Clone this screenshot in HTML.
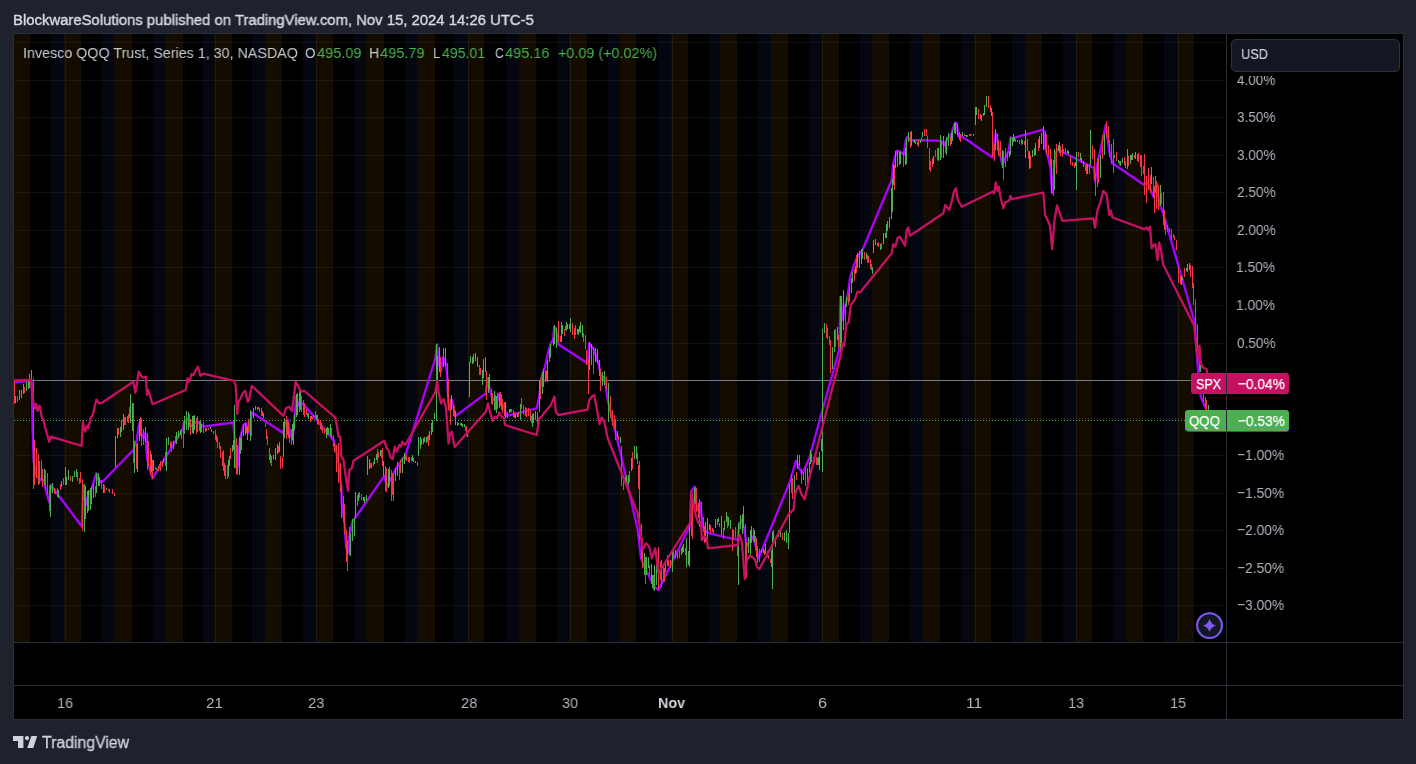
<!DOCTYPE html>
<html><head><meta charset="utf-8"><title>chart</title>
<style>
html,body{margin:0;padding:0;}
body{width:1416px;height:764px;background:#1e222d;overflow:hidden;position:relative;font-family:"Liberation Sans",sans-serif;}
.abs{position:absolute;white-space:nowrap;}
.t{position:absolute;white-space:nowrap;height:20px;line-height:20px;transform-origin:0 50%;will-change:transform;}
#frame{left:13px;top:33px;width:1391px;height:687px;background:#000;box-sizing:border-box;border:1px solid #2a2e39;}
#svg{left:0;top:0;}
#usd{left:1230.5px;top:38.5px;width:169.5px;height:33px;box-sizing:border-box;border:1px solid #2e323e;border-radius:5px;background:#131722;}
#mask4{left:1228px;top:71.5px;width:174px;height:4.5px;background:#000}
.lab{position:absolute;height:21px;box-sizing:border-box}
</style></head><body>
<div class="t" style="left:12.60px;top:9.75px;font-size:14.9px;color:#d9dbe1;transform:scaleX(0.9976);-webkit-text-stroke:0.4px #d9dbe1;">BlockwareSolutions published on TradingView.com, Nov 15, 2024 14:26 UTC-5</div>
<div id="frame" class="abs"></div>
<svg id="svg" class="abs" width="1416" height="764" viewBox="0 0 1416 764">
<defs><clipPath id="cp"><rect x="14" y="34" width="1212" height="608"/></clipPath></defs>
<rect x="14" y="34" width="16" height="608" fill="#140c01" shape-rendering="crispEdges"/>
<rect x="51" y="34" width="13" height="608" fill="#04070f" shape-rendering="crispEdges"/>
<rect x="64" y="34" width="17" height="608" fill="#140c01" shape-rendering="crispEdges"/>
<rect x="102" y="34" width="12" height="608" fill="#04070f" shape-rendering="crispEdges"/>
<rect x="114" y="34" width="18" height="608" fill="#140c01" shape-rendering="crispEdges"/>
<rect x="153" y="34" width="12" height="608" fill="#04070f" shape-rendering="crispEdges"/>
<rect x="165" y="34" width="18" height="608" fill="#140c01" shape-rendering="crispEdges"/>
<rect x="203" y="34" width="11" height="608" fill="#04070f" shape-rendering="crispEdges"/>
<rect x="214" y="34" width="18" height="608" fill="#140c01" shape-rendering="crispEdges"/>
<rect x="252" y="34" width="13" height="608" fill="#04070f" shape-rendering="crispEdges"/>
<rect x="265" y="34" width="17" height="608" fill="#140c01" shape-rendering="crispEdges"/>
<rect x="303" y="34" width="13" height="608" fill="#04070f" shape-rendering="crispEdges"/>
<rect x="316" y="34" width="17" height="608" fill="#140c01" shape-rendering="crispEdges"/>
<rect x="354" y="34" width="12" height="608" fill="#04070f" shape-rendering="crispEdges"/>
<rect x="366" y="34" width="18" height="608" fill="#140c01" shape-rendering="crispEdges"/>
<rect x="405" y="34" width="12" height="608" fill="#04070f" shape-rendering="crispEdges"/>
<rect x="417" y="34" width="18" height="608" fill="#140c01" shape-rendering="crispEdges"/>
<rect x="454" y="34" width="14" height="608" fill="#04070f" shape-rendering="crispEdges"/>
<rect x="468" y="34" width="16" height="608" fill="#140c01" shape-rendering="crispEdges"/>
<rect x="506" y="34" width="13" height="608" fill="#04070f" shape-rendering="crispEdges"/>
<rect x="519" y="34" width="17" height="608" fill="#140c01" shape-rendering="crispEdges"/>
<rect x="557" y="34" width="12" height="608" fill="#04070f" shape-rendering="crispEdges"/>
<rect x="569" y="34" width="18" height="608" fill="#140c01" shape-rendering="crispEdges"/>
<rect x="608" y="34" width="12" height="608" fill="#04070f" shape-rendering="crispEdges"/>
<rect x="620" y="34" width="16" height="608" fill="#140c01" shape-rendering="crispEdges"/>
<rect x="658" y="34" width="13" height="608" fill="#04070f" shape-rendering="crispEdges"/>
<rect x="671" y="34" width="17" height="608" fill="#140c01" shape-rendering="crispEdges"/>
<rect x="709" y="34" width="11" height="608" fill="#04070f" shape-rendering="crispEdges"/>
<rect x="720" y="34" width="17" height="608" fill="#140c01" shape-rendering="crispEdges"/>
<rect x="758" y="34" width="13" height="608" fill="#04070f" shape-rendering="crispEdges"/>
<rect x="771" y="34" width="17" height="608" fill="#140c01" shape-rendering="crispEdges"/>
<rect x="809" y="34" width="13" height="608" fill="#04070f" shape-rendering="crispEdges"/>
<rect x="822" y="34" width="17" height="608" fill="#140c01" shape-rendering="crispEdges"/>
<rect x="860" y="34" width="12" height="608" fill="#04070f" shape-rendering="crispEdges"/>
<rect x="872" y="34" width="17" height="608" fill="#140c01" shape-rendering="crispEdges"/>
<rect x="910" y="34" width="13" height="608" fill="#04070f" shape-rendering="crispEdges"/>
<rect x="923" y="34" width="17" height="608" fill="#140c01" shape-rendering="crispEdges"/>
<rect x="961" y="34" width="13" height="608" fill="#04070f" shape-rendering="crispEdges"/>
<rect x="974" y="34" width="17" height="608" fill="#140c01" shape-rendering="crispEdges"/>
<rect x="1012" y="34" width="13" height="608" fill="#04070f" shape-rendering="crispEdges"/>
<rect x="1025" y="34" width="17" height="608" fill="#140c01" shape-rendering="crispEdges"/>
<rect x="1063" y="34" width="13" height="608" fill="#04070f" shape-rendering="crispEdges"/>
<rect x="1076" y="34" width="16" height="608" fill="#140c01" shape-rendering="crispEdges"/>
<rect x="1113" y="34" width="13" height="608" fill="#04070f" shape-rendering="crispEdges"/>
<rect x="1126" y="34" width="17" height="608" fill="#140c01" shape-rendering="crispEdges"/>
<rect x="1164" y="34" width="13" height="608" fill="#04070f" shape-rendering="crispEdges"/>
<rect x="1177" y="34" width="17" height="608" fill="#140c01" shape-rendering="crispEdges"/>
<line x1="14" x2="1226" y1="605.5" y2="605.5" stroke="rgba(240,243,250,0.058)" stroke-width="1"/>
<line x1="14" x2="1226" y1="568.5" y2="568.5" stroke="rgba(240,243,250,0.058)" stroke-width="1"/>
<line x1="14" x2="1226" y1="530.5" y2="530.5" stroke="rgba(240,243,250,0.058)" stroke-width="1"/>
<line x1="14" x2="1226" y1="493.5" y2="493.5" stroke="rgba(240,243,250,0.058)" stroke-width="1"/>
<line x1="14" x2="1226" y1="455.5" y2="455.5" stroke="rgba(240,243,250,0.058)" stroke-width="1"/>
<line x1="14" x2="1226" y1="418.5" y2="418.5" stroke="rgba(240,243,250,0.058)" stroke-width="1"/>
<line x1="14" x2="1226" y1="380.5" y2="380.5" stroke="rgba(240,243,250,0.058)" stroke-width="1"/>
<line x1="14" x2="1226" y1="343.5" y2="343.5" stroke="rgba(240,243,250,0.058)" stroke-width="1"/>
<line x1="14" x2="1226" y1="305.5" y2="305.5" stroke="rgba(240,243,250,0.058)" stroke-width="1"/>
<line x1="14" x2="1226" y1="267.5" y2="267.5" stroke="rgba(240,243,250,0.058)" stroke-width="1"/>
<line x1="14" x2="1226" y1="230.5" y2="230.5" stroke="rgba(240,243,250,0.058)" stroke-width="1"/>
<line x1="14" x2="1226" y1="192.5" y2="192.5" stroke="rgba(240,243,250,0.058)" stroke-width="1"/>
<line x1="14" x2="1226" y1="155.5" y2="155.5" stroke="rgba(240,243,250,0.058)" stroke-width="1"/>
<line x1="14" x2="1226" y1="117.5" y2="117.5" stroke="rgba(240,243,250,0.058)" stroke-width="1"/>
<line x1="14" x2="1226" y1="80.5" y2="80.5" stroke="rgba(240,243,250,0.058)" stroke-width="1"/>
<line x1="14" x2="1226" y1="42.5" y2="42.5" stroke="rgba(240,243,250,0.058)" stroke-width="1"/>
<line x1="65.5" x2="65.5" y1="34" y2="642" stroke="rgba(245,225,195,0.065)" stroke-width="1"/>
<line x1="215.5" x2="215.5" y1="34" y2="642" stroke="rgba(245,225,195,0.065)" stroke-width="1"/>
<line x1="316.5" x2="316.5" y1="34" y2="642" stroke="rgba(245,225,195,0.065)" stroke-width="1"/>
<line x1="468.5" x2="468.5" y1="34" y2="642" stroke="rgba(245,225,195,0.065)" stroke-width="1"/>
<line x1="570.5" x2="570.5" y1="34" y2="642" stroke="rgba(245,225,195,0.065)" stroke-width="1"/>
<line x1="672.5" x2="672.5" y1="34" y2="642" stroke="rgba(245,225,195,0.065)" stroke-width="1"/>
<line x1="822.5" x2="822.5" y1="34" y2="642" stroke="rgba(245,225,195,0.065)" stroke-width="1"/>
<line x1="975.5" x2="975.5" y1="34" y2="642" stroke="rgba(245,225,195,0.065)" stroke-width="1"/>
<line x1="1076.5" x2="1076.5" y1="34" y2="642" stroke="rgba(245,225,195,0.065)" stroke-width="1"/>
<line x1="1178.5" x2="1178.5" y1="34" y2="642" stroke="rgba(245,225,195,0.065)" stroke-width="1"/>
<g clip-path="url(#cp)">
<line x1="14" x2="1192" y1="380.5" y2="380.5" stroke="#787b86" stroke-width="1"/>
<line x1="14" x2="1186" y1="420.5" y2="420.5" stroke="#4caf50" stroke-width="1" stroke-dasharray="1,2"/>
<path d="M13.7,382.5 L30.0,380.8 L31.7,381.7 L32.5,426.7 L33.7,461.7 L36.7,476.7 L40.8,480.0 L44.2,480.0 L45.8,490.0 L49.2,502.5 L50.8,485.0 L82.0,526.7 L83.0,485.0 L85.8,505.0 L88.3,495.0 L91.7,488.3 L96.3,473.3 L98.3,480.0 L101.7,482.5 L133.3,450.0 L136.7,440.0 L139.2,423.3 L141.7,435.0 L143.3,438.3 L145.3,433.3 L147.0,458.3 L150.0,470.0 L152.5,478.3 L182.5,430.0 L184.2,423.3 L188.3,418.3 L190.8,426.7 L193.3,423.3 L197.5,421.7 L203.3,426.7 L233.3,422.5 L235.0,443.3 L236.3,468.3 L237.7,466.7 L240.2,438.0 L243.5,425.0 L246.0,423.3 L248.5,433.3 L251.8,412.5 L283.2,433.0 L285.2,421.7 L287.7,420.0 L290.2,433.3 L292.7,440.0 L294.3,420.0 L296.3,396.7 L298.5,405.8 L301.8,403.3 L304.3,405.0 L333.5,440.0 L336.0,450.0 L338.5,463.3 L341.3,486.7 L341.8,505.0 L344.3,520.0 L346.0,546.7 L347.7,553.3 L349.3,536.7 L352.7,520.8 L354.3,519.2 L384.3,475.8 L386.8,486.7 L391.0,478.3 L396.0,468.3 L402.7,458.3 L405.2,455.8 L435.5,358.0 L437.0,344.5 L439.2,365.0 L440.8,371.7 L443.0,357.5 L445.0,360.0 L447.0,373.3 L448.3,403.3 L449.7,410.0 L451.7,399.2 L454.2,410.0 L455.8,415.8 L485.8,393.3 L487.5,378.3 L489.2,386.7 L491.7,396.7 L494.2,400.0 L496.7,403.3 L499.5,393.3 L501.7,401.7 L504.2,408.3 L506.7,415.8 L536.7,408.3 L539.2,396.7 L541.7,376.7 L545.0,366.7 L548.3,351.7 L550.8,343.3 L553.0,340.0 L554.2,326.7 L555.8,328.3 L558.3,344.2 L587.5,363.3 L589.2,343.3 L591.7,346.7 L594.2,350.0 L596.7,358.3 L599.2,366.7 L601.7,380.0 L604.2,376.7 L606.7,393.3 L607.7,400.0 L621.0,455.0 L637.7,530.0 L641.0,558.3 L644.3,566.7 L649.3,576.7 L651.8,581.7 L654.3,586.7 L658.5,590.0 L690.2,525.0 L691.0,491.7 L694.7,486.7 L696.8,510.0 L700.2,501.7 L702.7,526.7 L706.0,531.7 L709.3,533.3 L737.7,540.0 L739.3,523.3 L741.8,520.0 L744.3,530.0 L746.8,546.7 L749.3,541.7 L752.7,536.7 L756.0,546.7 L758.5,558.3 L789.3,483.3 L796.0,460.8 L798.5,466.7 L801.8,473.3 L804.2,470.0 L807.7,461.7 L809.3,458.3 L823.3,407.0 L839.2,350.0 L840.5,296.7 L842.5,320.0 L845.0,306.7 L847.5,296.7 L850.0,278.0 L853.3,266.7 L856.7,258.3 L860.0,253.3 L862.5,250.0 L891.7,180.0 L893.3,163.3 L896.7,150.8 L900.8,151.7 L903.7,155.0 L905.8,140.0 L907.5,136.7 L910.0,140.0 L940.8,140.8 L944.2,145.0 L947.5,138.3 L950.8,135.0 L955.0,122.5 L956.7,123.3 L958.3,136.7 L960.8,135.8 L992.5,157.5 L994.2,143.3 L995.8,133.3 L998.0,143.3 L1000.0,155.0 L1002.5,165.0 L1005.0,158.3 L1008.3,151.7 L1010.8,137.5 L1012.5,138.3 L1043.3,129.5 L1045.5,149.0 L1048.3,158.3 L1050.5,169.0 L1052.2,193.3 L1054.2,167.0 L1055.8,153.3 L1057.5,149.2 L1062.5,151.7 L1094.2,168.3 L1095.0,181.7 L1097.5,163.3 L1100.8,148.3 L1104.2,132.5 L1105.8,125.0 L1107.5,138.3 L1110.0,154.2 L1112.5,163.3 L1144.2,185.0 L1147.5,181.7 L1150.8,190.0 L1153.3,196.7 L1156.7,183.3 L1159.2,203.3 L1162.5,211.7 L1164.2,216.7 L1195.0,323.3 L1196.5,351.5 L1198.2,371.5 L1200.7,396.4 L1204.0,404.7 L1206.5,409.7 L1209.0,418.0" fill="none" stroke="#aa00ff" stroke-width="2.3" stroke-linejoin="round" stroke-linecap="round"/>
<path d="M15.5,396.3V403.2M19.5,390.0V400.0M21.5,389.9V397.7M23.5,384.4V393.6M26.5,381.6V391.1M28.5,381.1V389.4M29.5,374.2V387.7M31.5,370.4V382.0M44.5,468.8V485.3M50.5,484.8V517.3M52.5,482.5V492.7M58.5,489.8V497.8M61.5,480.8V487.2M65.5,466.6V484.5M66.5,477.4V484.5M68.5,470.1V479.7M72.5,476.0V481.7M74.5,470.5V477.4M76.5,469.0V476.5M84.5,483.5V532.4M85.5,486.3V519.4M87.5,491.4V512.9M88.5,490.2V510.8M90.5,487.8V509.8M91.5,487.4V503.8M93.5,483.7V497.7M96.5,472.9V492.5M98.5,472.8V485.5M99.5,476.7V486.1M103.5,484.0V492.5M106.5,488.0V490.0M115.5,436.4V467.2M117.5,428.3V437.8M120.5,426.9V436.6M121.5,420.4V431.7M123.5,413.9V429.7M130.5,394.4V422.5M132.5,402.7V430.8M134.5,441.3V472.6M137.5,443.1V471.7M139.5,418.8V441.1M145.5,427.3V441.5M151.5,454.1V471.5M153.5,460.0V471.4M156.5,468.0V470.0M163.5,458.8V463.2M166.5,438.3V470.7M168.5,437.0V444.7M173.5,440.8V448.5M176.5,431.6V443.7M178.5,430.6V437.6M180.5,430.1V434.8M184.5,415.9V434.1M186.5,410.9V430.3M188.5,412.0V430.0M192.5,416.4V432.8M193.5,415.6V433.8M194.5,414.7V429.5M200.5,419.7V432.5M201.5,423.9V432.4M210.5,427.0V429.2M228.5,460.2V476.7M229.5,456.0V465.6M232.5,444.5V452.0M233.5,440.1V449.7M234.5,405.1V467.8M239.5,436.5V475.1M240.5,438.2V454.4M241.5,432.3V449.7M243.5,425.0V436.3M245.5,422.7V435.2M247.5,425.5V439.8M250.5,410.2V441.4M253.5,408.4V418.0M255.5,406.3V409.7M257.5,406.8V409.9M263.5,412.8V417.6M270.5,453.8V462.8M273.5,455.3V459.0M275.5,447.8V460.2M277.5,444.3V454.1M279.5,441.9V451.5M283.5,421.8V457.2M284.5,418.3V438.3M292.5,424.3V440.2M293.5,422.5V445.0M294.5,414.5V430.2M296.5,393.5V417.0M297.5,393.1V415.3M299.5,388.6V411.5M300.5,391.1V409.5M308.5,412.8V418.5M311.5,415.9V419.0M313.5,414.6V416.9M316.5,415.4V420.0M326.5,428.3V437.5M327.5,426.7V435.0M328.5,427.7V434.3M330.5,423.7V435.9M350.5,532.8V555.7M352.5,518.5V540.6M354.5,517.9V536.1M355.5,492.2V518.2M358.5,493.3V500.8M363.5,497.1V500.9M364.5,496.9V503.0M366.5,495.1V500.7M367.5,456.4V475.1M369.5,459.4V468.9M374.5,458.4V463.6M376.5,453.9V460.2M380.5,449.7V456.0M383.5,461.2V476.0M388.5,468.6V488.1M389.5,467.4V485.7M395.5,468.3V481.1M397.5,461.7V475.7M402.5,457.8V472.7M404.5,452.5V464.2M412.5,455.3V461.1M413.5,458.1V461.7M415.5,460.6V463.3M418.5,437.2V456.1M420.5,437.0V448.6M421.5,439.0V444.8M423.5,438.2V443.6M424.5,437.4V441.8M426.5,437.3V442.9M429.5,430.9V440.4M431.5,423.1V435.0M432.5,420.3V432.3M434.5,412.9V418.8M436.5,344.4V421.2M437.5,355.5V388.2M439.5,347.2V372.1M443.5,348.0V367.1M445.5,348.4V365.7M451.5,395.1V410.3M455.5,411.3V425.2M458.5,422.9V425.1M460.5,423.1V424.9M461.5,423.1V425.5M462.5,423.6V426.5M464.5,424.2V427.0M467.5,430.9V437.1M469.5,361.7V396.6M470.5,355.5V363.1M472.5,357.0V363.6M473.5,353.9V363.3M475.5,352.5V361.1M477.5,356.9V367.0M482.5,370.1V385.1M483.5,359.0V377.8M485.5,356.6V371.9M488.5,376.7V392.9M489.5,374.2V388.9M494.5,391.0V410.1M496.5,395.8V412.6M499.5,394.4V408.0M505.5,402.4V418.3M509.5,408.8V413.3M510.5,408.7V412.3M515.5,413.8V418.2M517.5,412.8V416.8M520.5,403.7V419.7M532.5,413.7V427.3M533.5,412.9V422.9M535.5,410.6V419.7M537.5,411.8V434.7M539.5,381.1V411.8M542.5,371.9V394.4M543.5,369.0V387.0M545.5,370.6V381.7M547.5,360.3V382.3M549.5,349.1V362.0M550.5,344.1V358.2M553.5,337.9V345.8M554.5,324.8V344.3M556.5,328.2V348.1M561.5,321.6V341.5M562.5,325.1V333.8M566.5,321.5V330.6M567.5,323.8V328.9M569.5,323.8V328.6M570.5,318.0V332.0M577.5,328.8V334.3M578.5,328.9V335.4M579.5,326.2V332.3M580.5,322.2V333.4M582.5,325.0V336.9M589.5,342.3V369.5M591.5,343.5V365.0M595.5,348.1V362.3M597.5,349.3V363.3M599.5,359.6V376.4M602.5,371.8V386.1M604.5,370.9V384.6M608.5,383.4V421.5M617.5,431.1V436.9M620.5,437.3V443.0M625.5,476.5V483.4M626.5,475.3V484.7M628.5,474.5V485.3M631.5,458.3V471.4M634.5,445.7V458.9M636.5,446.0V458.7M644.5,552.5V575.2M646.5,556.8V575.1M648.5,557.3V568.4M651.5,564.4V583.5M652.5,575.1V588.4M654.5,564.6V591.3M656.5,560.0V584.6M665.5,562.9V572.4M672.5,550.7V571.7M675.5,550.0V557.5M681.5,548.1V554.8M682.5,546.3V552.6M683.5,544.4V551.7M686.5,538.2V567.4M688.5,551.0V565.1M689.5,526.2V566.9M694.5,488.1V509.7M705.5,521.9V542.0M707.5,518.1V537.7M709.5,523.8V530.4M715.5,519.2V528.3M717.5,519.1V524.6M718.5,518.0V522.0M721.5,515.7V534.9M724.5,520.5V529.6M726.5,512.1V522.1M728.5,517.1V525.9M730.5,519.9V528.5M738.5,523.3V585.3M740.5,514.8V529.4M742.5,514.3V533.5M743.5,506.0V528.3M748.5,536.5V552.8M750.5,529.7V555.7M751.5,525.7V542.5M754.5,530.3V541.8M761.5,548.7V553.4M763.5,548.3V552.6M765.5,543.5V553.7M771.5,550.4V567.1M772.5,532.1V588.7M773.5,529.5V540.1M775.5,536.7V546.6M778.5,530.1V537.0M780.5,528.0V536.5M784.5,531.5V540.9M786.5,530.0V542.9M788.5,532.8V549.1M789.5,484.1V533.0M794.5,475.1V503.4M797.5,454.7V469.3M799.5,454.6V465.8M803.5,472.2V479.5M807.5,468.0V485.4M809.5,461.5V473.0M810.5,449.5V464.0M811.5,453.8V461.6M818.5,456.7V464.6M819.5,452.0V469.7M821.5,439.4V451.1M822.5,328.5V472.0M824.5,322.6V333.4M832.5,346.7V369.0M834.5,330.1V351.8M837.5,327.2V339.6M840.5,295.8V352.2M841.5,295.8V343.3M843.5,290.4V329.8M846.5,296.6V306.9M851.5,277.5V293.3M852.5,272.4V283.3M855.5,265.5V274.4M857.5,253.3V267.5M859.5,251.1V268.1M861.5,248.9V263.5M862.5,248.7V259.2M866.5,253.3V258.5M872.5,266.9V273.8M873.5,239.8V253.1M875.5,239.0V244.6M880.5,243.5V249.8M883.5,233.0V244.2M885.5,233.4V237.6M886.5,223.8V237.7M887.5,220.9V231.4M889.5,217.0V228.1M891.5,187.8V219.4M892.5,178.5V212.3M893.5,163.5V184.6M895.5,150.8V167.5M897.5,150.5V167.1M899.5,152.4V165.3M900.5,151.7V163.8M905.5,148.2V164.7M906.5,139.2V163.9M908.5,131.8V142.2M911.5,131.3V146.0M914.5,139.8V142.5M917.5,141.8V144.8M920.5,140.0V142.8M922.5,132.4V137.3M933.5,155.6V163.6M938.5,147.9V161.2M940.5,135.0V160.1M943.5,136.1V158.2M946.5,136.8V154.5M948.5,133.3V145.9M951.5,133.4V144.1M952.5,130.3V141.0M954.5,122.6V132.9M955.5,122.5V134.3M957.5,123.8V135.1M962.5,131.6V136.4M966.5,135.0V137.0M975.5,106.6V124.8M976.5,107.0V114.6M981.5,115.3V120.7M983.5,112.6V116.3M984.5,104.5V114.7M986.5,95.7V107.1M991.5,107.5V116.1M995.5,129.0V150.4M1002.5,150.2V167.6M1009.5,150.5V156.6M1010.5,137.0V155.2M1012.5,137.7V145.7M1013.5,134.2V141.6M1014.5,136.6V140.6M1017.5,139.6V142.3M1022.5,139.5V144.3M1025.5,130.4V157.6M1029.5,150.6V168.6M1032.5,149.6V156.5M1034.5,148.2V155.9M1035.5,142.7V155.1M1039.5,136.0V148.4M1041.5,132.8V144.0M1043.5,126.3V150.2M1051.5,159.1V193.0M1054.5,148.8V190.1M1058.5,145.2V151.1M1059.5,141.9V152.7M1067.5,150.2V152.9M1068.5,151.2V154.0M1075.5,161.8V166.2M1076.5,151.5V189.9M1080.5,152.8V159.6M1081.5,157.8V163.3M1083.5,160.8V167.1M1087.5,163.8V174.4M1090.5,129.9V164.8M1100.5,154.6V178.4M1104.5,133.9V154.5M1114.5,154.6V158.4M1118.5,159.5V162.5M1120.5,161.3V166.0M1122.5,157.6V163.1M1127.5,148.7V168.5M1130.5,155.2V163.9M1131.5,154.8V160.0M1132.5,153.1V160.2M1135.5,151.9V158.6M1151.5,167.2V184.2M1160.5,185.0V206.2M1181.5,276.2V284.8M1182.5,277.0V279.9M1186.5,267.6V271.3M1187.5,264.1V271.9M1189.5,263.2V270.1M1200.5,365.0V372.4M1208.5,404.9V411.1" stroke="#4caf50" stroke-width="1" fill="none" shape-rendering="crispEdges"/><path d="M14.5,380.6V404.0M17.5,396.1V402.0M24.5,386.5V392.6M33.5,377.5V489.0M34.5,440.0V484.5M36.5,447.9V478.3M38.5,453.8V484.6M39.5,461.3V484.1M41.5,459.7V480.3M42.5,469.2V487.3M45.5,470.2V489.3M47.5,472.6V495.3M49.5,485.5V510.8M54.5,488.3V493.8M55.5,489.5V494.2M57.5,488.2V496.6M60.5,483.5V490.1M63.5,478.0V484.5M70.5,476.0V481.0M77.5,471.9V480.5M79.5,477.6V483.5M80.5,471.5V482.7M82.5,479.1V530.9M95.5,485.5V497.2M101.5,480.0V488.5M104.5,485.2V493.0M108.5,488.8V491.1M109.5,488.6V493.3M112.5,489.1V493.9M114.5,492.6V496.3M118.5,428.2V435.2M124.5,417.0V424.5M125.5,417.3V425.2M127.5,416.0V422.3M128.5,413.6V423.4M129.5,407.3V418.3M133.5,403.3V463.0M136.5,444.1V469.2M140.5,417.2V435.6M141.5,417.7V446.3M143.5,428.8V444.8M147.5,432.9V469.9M148.5,441.0V465.6M150.5,451.2V475.0M152.5,459.8V479.3M155.5,466.5V469.1M158.5,466.4V470.5M159.5,464.3V467.8M160.5,460.8V471.1M162.5,461.7V467.4M165.5,451.7V465.5M170.5,440.7V447.6M171.5,442.4V451.7M175.5,435.6V443.2M181.5,428.8V439.2M183.5,421.3V447.8M189.5,413.6V427.2M190.5,418.5V434.7M196.5,417.9V433.6M197.5,416.1V432.0M199.5,421.0V431.3M203.5,421.6V433.2M205.5,428.4V431.8M206.5,427.8V430.6M208.5,428.1V430.0M211.5,428.6V431.6M213.5,430.9V434.0M215.5,430.3V439.8M216.5,434.8V442.2M217.5,436.9V447.8M219.5,442.1V449.4M220.5,445.9V457.6M222.5,451.8V466.1M223.5,449.5V470.5M224.5,463.4V476.1M225.5,465.4V478.7M227.5,465.3V479.2M230.5,448.4V459.3M236.5,437.8V473.9M237.5,445.1V475.4M246.5,426.6V433.4M248.5,418.6V432.0M251.5,412.4V435.8M258.5,406.6V409.4M259.5,408.3V411.8M261.5,408.3V415.8M262.5,410.9V416.3M265.5,422.6V427.0M266.5,429.1V438.5M267.5,435.7V444.5M269.5,447.9V460.4M271.5,456.4V466.0M278.5,445.5V452.8M280.5,455.5V468.5M282.5,457.4V468.3M286.5,415.7V438.9M287.5,419.9V435.1M288.5,421.7V437.8M289.5,431.1V442.6M291.5,429.2V444.8M301.5,395.9V411.9M303.5,400.1V415.1M304.5,402.7V416.8M306.5,409.0V415.0M307.5,412.5V416.6M310.5,416.3V421.8M312.5,416.7V419.5M315.5,410.6V417.6M317.5,414.5V424.0M318.5,419.0V425.4M320.5,419.6V429.0M321.5,423.2V429.8M322.5,427.3V433.1M324.5,428.4V434.0M331.5,427.9V438.7M333.5,434.9V447.0M334.5,442.6V452.2M336.5,445.4V472.3M338.5,442.5V483.0M340.5,462.7V492.1M341.5,484.7V518.3M343.5,495.9V522.1M344.5,504.1V533.9M346.5,529.9V561.7M347.5,539.7V570.6M349.5,526.9V554.5M357.5,495.0V505.9M359.5,492.0V497.9M361.5,494.2V500.0M370.5,463.1V468.2M371.5,463.4V468.4M373.5,461.5V466.1M377.5,448.9V462.8M378.5,452.3V457.7M381.5,450.1V458.0M382.5,448.0V466.1M385.5,465.9V490.9M386.5,467.9V491.8M391.5,469.8V501.1M392.5,472.8V494.6M393.5,473.6V501.4M399.5,464.9V480.1M400.5,460.4V472.7M405.5,454.5V459.7M406.5,455.4V461.1M408.5,457.3V462.4M409.5,456.9V463.1M411.5,456.9V461.3M417.5,462.2V466.1M427.5,436.3V441.7M428.5,434.7V446.3M440.5,356.7V377.0M447.5,362.9V396.7M448.5,379.2V410.3M450.5,399.2V425.0M453.5,404.1V416.1M454.5,406.1V416.5M457.5,421.5V426.2M465.5,425.9V430.5M466.5,426.3V435.5M479.5,365.1V375.2M480.5,367.5V374.6M486.5,370.5V400.3M491.5,388.5V403.6M492.5,392.6V404.7M495.5,394.5V410.0M497.5,392.5V409.1M500.5,391.7V405.7M501.5,394.3V409.8M502.5,399.1V413.2M504.5,402.3V416.1M507.5,412.0V417.6M511.5,409.1V411.8M513.5,410.2V417.4M514.5,412.4V417.7M518.5,411.7V416.5M521.5,398.0V409.4M523.5,404.5V415.2M525.5,406.6V415.8M526.5,408.2V417.3M528.5,408.0V416.1M530.5,410.1V420.1M531.5,416.0V423.2M540.5,377.8V399.4M546.5,370.1V381.0M558.5,321.4V341.7M560.5,335.9V342.3M564.5,329.0V335.5M565.5,325.6V330.2M572.5,323.4V334.9M574.5,327.8V339.2M575.5,325.0V334.8M583.5,332.5V341.5M585.5,334.6V349.4M586.5,350.3V365.0M588.5,359.1V394.2M593.5,346.5V373.5M600.5,368.9V391.0M606.5,376.7V389.1M610.5,396.1V417.6M612.5,409.8V425.9M614.5,415.1V429.4M615.5,418.6V439.6M618.5,436.2V440.1M621.5,446.2V486.4M623.5,474.6V489.7M629.5,471.3V481.7M632.5,451.6V468.9M637.5,452.6V463.7M638.5,464.5V489.1M639.5,461.4V539.7M641.5,523.5V558.5M642.5,538.1V567.8M645.5,557.4V584.3M649.5,565.3V574.9M653.5,574.5V590.0M658.5,546.8V589.4M660.5,561.0V579.9M661.5,560.2V587.0M663.5,565.5V582.1M664.5,568.1V581.8M667.5,555.1V566.4M668.5,560.0V566.3M670.5,559.8V567.5M673.5,550.4V558.7M677.5,551.8V558.5M679.5,549.6V557.6M685.5,547.5V554.7M691.5,494.9V536.0M692.5,494.9V539.1M695.5,486.6V503.8M696.5,487.8V512.4M698.5,502.9V518.4M699.5,499.3V526.5M701.5,502.1V539.7M703.5,517.0V532.2M704.5,525.7V543.3M710.5,525.1V532.9M712.5,527.9V532.4M713.5,529.3V532.8M719.5,522.9V526.7M723.5,527.8V539.1M727.5,516.1V527.5M732.5,528.5V551.0M733.5,530.0V538.8M735.5,526.5V537.6M737.5,538.0V555.8M745.5,524.2V574.9M746.5,541.8V578.2M753.5,528.3V541.6M755.5,535.6V549.6M756.5,538.2V557.3M757.5,545.9V562.7M759.5,548.8V561.5M764.5,549.9V555.0M767.5,551.4V557.1M768.5,555.3V558.6M770.5,558.5V562.6M776.5,534.7V538.5M782.5,533.0V539.9M791.5,474.3V493.3M792.5,478.0V499.3M796.5,472.1V479.7M801.5,469.0V483.9M805.5,467.1V486.2M813.5,457.1V460.9M814.5,458.7V462.9M816.5,457.1V464.6M817.5,458.3V465.2M826.5,324.0V337.6M827.5,327.6V338.6M829.5,336.4V344.6M830.5,339.7V372.7M835.5,328.7V347.4M838.5,335.4V347.4M845.5,304.3V335.0M848.5,294.1V305.0M849.5,286.1V301.5M854.5,268.5V280.5M856.5,254.6V273.3M864.5,252.4V260.0M867.5,255.2V262.8M868.5,256.2V263.1M870.5,259.1V268.7M871.5,263.9V270.4M877.5,242.8V246.2M878.5,242.2V247.1M881.5,243.3V248.6M894.5,165.0V189.7M903.5,151.7V166.9M910.5,132.3V147.6M913.5,139.5V142.3M915.5,140.5V143.5M918.5,140.1V146.9M921.5,136.5V141.4M924.5,128.8V136.1M926.5,129.0V135.8M927.5,136.4V147.6M929.5,148.1V170.4M930.5,161.3V171.7M932.5,158.0V166.8M935.5,150.1V157.1M937.5,148.4V159.7M941.5,140.1V158.3M945.5,140.8V153.0M950.5,137.2V145.7M959.5,131.5V140.2M960.5,133.7V141.7M964.5,133.5V136.3M965.5,134.6V136.4M967.5,135.0V136.7M969.5,134.0V135.9M970.5,134.3V135.5M971.5,133.8V135.1M973.5,134.0V136.0M978.5,109.0V118.5M980.5,114.4V119.1M988.5,96.2V107.8M990.5,104.7V112.4M992.5,112.1V157.2M994.5,143.5V160.9M997.5,134.3V151.3M998.5,139.7V155.9M1000.5,140.7V157.3M1003.5,150.8V180.2M1005.5,147.9V167.3M1007.5,152.2V161.3M1015.5,138.6V142.4M1019.5,140.2V144.0M1021.5,138.9V145.1M1024.5,141.1V144.9M1027.5,139.4V151.2M1028.5,150.8V158.7M1030.5,154.9V167.9M1038.5,139.0V151.0M1045.5,131.1V148.8M1046.5,133.6V154.1M1048.5,145.1V156.4M1050.5,148.9V165.6M1053.5,159.6V195.9M1056.5,144.0V174.4M1060.5,145.9V155.8M1062.5,144.0V157.4M1063.5,148.5V154.2M1065.5,148.0V153.8M1070.5,155.5V165.1M1072.5,161.9V165.8M1074.5,162.8V167.5M1078.5,151.7V157.3M1085.5,165.1V170.9M1086.5,163.5V174.3M1089.5,163.9V173.5M1092.5,145.3V159.3M1094.5,149.3V180.1M1095.5,173.3V195.8M1097.5,157.5V186.6M1098.5,158.5V182.6M1102.5,134.5V159.0M1106.5,121.0V136.5M1108.5,125.8V141.7M1109.5,140.2V157.3M1111.5,144.3V164.1M1113.5,138.5V173.4M1116.5,151.9V160.5M1119.5,161.3V164.7M1124.5,157.4V165.4M1125.5,161.3V167.9M1128.5,156.3V166.2M1134.5,154.6V158.2M1137.5,154.0V160.8M1138.5,152.8V162.3M1140.5,154.8V167.2M1141.5,154.8V175.5M1143.5,166.4V173.6M1144.5,153.8V194.9M1146.5,175.7V202.6M1148.5,168.4V189.6M1150.5,175.4V192.7M1153.5,177.4V197.6M1154.5,185.6V212.5M1155.5,175.8V193.3M1156.5,180.9V208.8M1158.5,184.5V209.8M1161.5,193.0V204.2M1163.5,192.4V224.6M1164.5,210.4V230.4M1165.5,220.4V235.4M1167.5,224.6V231.5M1169.5,228.2V232.0M1171.5,228.6V240.2M1173.5,234.2V237.8M1174.5,236.0V240.1M1176.5,239.8V250.2M1178.5,267.2V283.3M1180.5,275.0V283.6M1184.5,267.5V277.0M1190.5,265.4V276.6M1192.5,265.6V287.5M1193.5,282.7V304.9M1195.5,298.6V329.7M1197.5,324.4V363.0M1199.5,349.5V371.5M1202.5,377.3V392.2M1203.5,390.0V401.5M1205.5,397.1V407.0M1206.5,400.4V411.2" stroke="#f23645" stroke-width="1" fill="none" shape-rendering="crispEdges"/>
<path d="M13.7,380.3 L30.8,380.0 L32.0,390.0 L33.3,401.7 L35.0,408.3 L36.3,404.2 L37.5,410.8 L39.7,405.8 L41.7,416.7 L43.3,420.0 L45.8,430.0 L49.2,441.7 L50.8,436.7 L81.7,445.8 L82.8,421.7 L85.0,431.7 L87.0,425.8 L88.3,428.3 L90.8,417.5 L92.8,415.0 L96.3,399.7 L99.2,403.3 L102.5,402.5 L133.3,381.7 L135.3,392.5 L136.7,385.0 L138.7,371.7 L141.7,376.7 L143.3,377.5 L145.8,376.7 L147.0,395.0 L148.3,390.0 L152.5,404.2 L185.8,390.0 L187.5,378.3 L189.2,381.7 L191.7,374.2 L193.3,375.0 L195.0,371.7 L198.0,366.7 L200.3,375.8 L203.3,373.7 L234.2,380.8 L235.8,386.7 L237.2,414.0 L238.5,402.0 L241.0,397.5 L242.7,393.3 L245.2,390.8 L247.7,401.7 L249.0,400.0 L251.8,385.8 L283.5,415.8 L286.0,408.3 L289.0,406.7 L291.8,410.8 L293.5,400.0 L295.7,381.7 L298.5,386.7 L301.0,391.7 L304.3,390.8 L335.2,417.5 L336.8,425.0 L338.5,436.7 L340.2,436.7 L341.3,456.7 L343.5,460.0 L346.0,478.3 L348.0,490.8 L349.3,470.0 L351.8,468.3 L353.5,460.8 L384.3,440.8 L386.8,448.3 L388.5,450.0 L390.2,456.7 L392.7,459.2 L394.7,446.7 L396.8,451.7 L399.3,445.0 L401.0,446.7 L402.3,441.7 L405.2,445.0 L435.2,392.5 L437.2,380.8 L438.5,391.7 L441.0,403.3 L443.5,399.2 L445.7,405.8 L446.8,418.3 L448.5,443.3 L450.2,433.3 L451.8,431.7 L454.7,447.0 L485.8,411.7 L488.0,403.3 L490.0,411.7 L492.5,420.8 L495.0,416.7 L496.7,418.3 L499.2,412.5 L501.7,416.7 L504.2,418.3 L505.0,425.0 L536.7,435.0 L539.2,418.3 L541.7,416.7 L545.0,411.7 L548.3,408.3 L550.8,405.0 L553.0,400.0 L554.5,396.7 L555.8,411.7 L558.3,415.0 L587.5,409.7 L589.2,400.0 L591.7,396.7 L594.2,395.0 L596.7,408.3 L599.5,424.0 L601.8,417.5 L604.3,421.7 L607.7,438.3 L637.7,513.3 L640.2,530.0 L642.7,550.0 L646.0,543.3 L649.3,546.7 L651.8,558.3 L655.2,548.3 L656.8,560.0 L658.5,573.0 L690.2,522.5 L691.3,491.7 L693.5,503.3 L696.0,516.7 L698.5,523.3 L701.0,521.7 L701.8,540.0 L704.3,536.7 L706.8,538.3 L708.0,548.3 L737.7,545.0 L739.7,535.0 L741.8,541.7 L744.8,579.2 L746.8,560.0 L750.2,555.8 L752.7,557.5 L755.2,560.0 L756.8,566.7 L759.3,569.2 L789.3,513.3 L793.5,510.0 L795.2,493.3 L798.5,485.8 L801.8,495.0 L804.7,499.2 L806.8,490.0 L809.3,478.3 L840.8,355.0 L842.5,343.3 L844.2,345.8 L846.3,324.2 L848.7,322.5 L850.8,305.0 L855.0,299.2 L857.5,291.7 L860.0,292.5 L891.7,253.3 L893.3,244.2 L895.3,246.7 L897.5,238.3 L899.7,236.7 L901.7,240.0 L905.0,245.8 L906.7,230.0 L908.3,227.5 L910.0,235.8 L943.3,213.3 L945.3,205.0 L949.2,210.0 L951.7,201.7 L954.2,190.8 L955.8,188.3 L958.0,200.0 L961.7,206.7 L992.5,191.7 L994.2,193.3 L995.8,182.5 L997.5,190.8 L998.7,186.7 L1000.8,198.3 L1003.3,208.3 L1005.0,202.5 L1009.2,200.8 L1010.5,195.8 L1011.7,199.2 L1043.3,192.5 L1045.0,215.0 L1047.5,220.0 L1050.0,225.8 L1052.2,249.2 L1054.5,220.0 L1057.0,205.5 L1062.5,220.8 L1093.3,218.3 L1095.0,227.5 L1097.5,210.0 L1100.8,200.8 L1103.3,190.8 L1106.7,195.0 L1109.2,215.0 L1110.8,210.8 L1112.5,217.5 L1144.2,229.2 L1146.7,227.5 L1148.0,230.0 L1150.0,226.7 L1151.7,248.3 L1153.7,245.0 L1155.3,244.2 L1157.5,260.0 L1159.2,242.5 L1160.8,248.3 L1163.0,264.2 L1194.2,325.8 L1196.2,346.6 L1198.2,359.9 L1199.5,345.7 L1200.7,361.5 L1202.4,367.3 L1206.5,369.0 L1207.5,374.0 L1209.0,381.0" fill="none" stroke="#c51162" stroke-width="2.3" stroke-linejoin="round" stroke-linecap="round"/>
</g>
<!-- pane separators / axis borders -->
<rect x="14" y="642" width="1389" height="1" fill="#2a2e39"/>
<rect x="14" y="685" width="1389" height="1" fill="#2a2e39"/>
<rect x="1226" y="34" width="1" height="685" fill="#282b34"/>
<!-- sparkle icon -->
<circle cx="1209.5" cy="625.6" r="12.4" fill="#131722" stroke="#8059f5" stroke-width="2.1"/>
<path d="M1209.5,618.9 Q1211,624 1216.1,625.5 Q1211,627 1209.5,632.1 Q1208,627 1202.9,625.5 Q1208,624 1209.5,618.9Z" fill="#8059f5"/>
<!-- footer logo -->
<g fill="#d1d4dc">
<path d="M13,736 H23.4 V748 H18 V741 H13Z"/>
<circle cx="27" cy="738.1" r="2.1"/>
<path d="M31.4,736 H37.2 L33.2,748 H27.2Z"/>
</g>
</svg>
<div class="t" style="left:1236.63px;top:595.36px;font-size:15.5px;color:#b2b5be;transform:scaleX(0.8897);">−3.00%</div>
<div class="t" style="left:1236.63px;top:558.36px;font-size:15.5px;color:#b2b5be;transform:scaleX(0.8897);">−2.50%</div>
<div class="t" style="left:1236.63px;top:520.36px;font-size:15.5px;color:#b2b5be;transform:scaleX(0.8897);">−2.00%</div>
<div class="t" style="left:1236.63px;top:483.36px;font-size:15.5px;color:#b2b5be;transform:scaleX(0.8897);">−1.50%</div>
<div class="t" style="left:1236.63px;top:445.36px;font-size:15.5px;color:#b2b5be;transform:scaleX(0.8897);">−1.00%</div>
<div class="t" style="left:1236.77px;top:333.36px;font-size:15.5px;color:#b2b5be;transform:scaleX(0.8762);">0.50%</div>
<div class="t" style="left:1236.28px;top:295.36px;font-size:15.5px;color:#b2b5be;transform:scaleX(0.8876);">1.00%</div>
<div class="t" style="left:1236.28px;top:257.36px;font-size:15.5px;color:#b2b5be;transform:scaleX(0.8876);">1.50%</div>
<div class="t" style="left:1236.64px;top:220.36px;font-size:15.5px;color:#b2b5be;transform:scaleX(0.8792);">2.00%</div>
<div class="t" style="left:1236.64px;top:182.36px;font-size:15.5px;color:#b2b5be;transform:scaleX(0.8792);">2.50%</div>
<div class="t" style="left:1236.82px;top:145.36px;font-size:15.5px;color:#b2b5be;transform:scaleX(0.8751);">3.00%</div>
<div class="t" style="left:1236.82px;top:107.36px;font-size:15.5px;color:#b2b5be;transform:scaleX(0.8751);">3.50%</div>
<div class="t" style="left:1237.00px;top:70.36px;font-size:15.5px;color:#b2b5be;transform:scaleX(0.8711);">4.00%</div>
<div id="mask4" class="abs"></div>
<div class="t" style="left:56.80px;top:693.05px;font-size:15.2px;color:#b2b5be;transform:scaleX(0.9536);">16</div>
<div class="t" style="left:206.37px;top:693.05px;font-size:15.2px;color:#b2b5be;transform:scaleX(0.9709);">21</div>
<div class="t" style="left:308.07px;top:693.05px;font-size:15.2px;color:#b2b5be;transform:scaleX(0.9677);">23</div>
<div class="t" style="left:460.57px;top:693.05px;font-size:15.2px;color:#b2b5be;transform:scaleX(0.9677);">28</div>
<div class="t" style="left:562.48px;top:693.05px;font-size:15.2px;color:#b2b5be;transform:scaleX(0.9494);">30</div>
<div class="t" style="left:657.66px;top:693.05px;font-size:15.2px;color:#d1d4dc;font-weight:bold;transform:scaleX(0.9439);">Nov</div>
<div class="t" style="left:817.69px;top:693.05px;font-size:15.2px;color:#b2b5be;transform:scaleX(1.0780);">6</div>
<div class="t" style="left:966.31px;top:693.05px;font-size:15.2px;color:#b2b5be;transform:scaleX(1.0323);">11</div>
<div class="t" style="left:1068.20px;top:693.05px;font-size:15.2px;color:#b2b5be;transform:scaleX(0.9536);">13</div>
<div class="t" style="left:1169.91px;top:693.05px;font-size:15.2px;color:#b2b5be;transform:scaleX(0.9505);">15</div>
<div id="usd" class="abs"></div>
<div class="t" style="left:1241.43px;top:44.45px;font-size:15.2px;color:#d1d4dc;transform:scaleX(0.8444);-webkit-text-stroke:0.2px #d1d4dc;">USD</div>
<div class="t" style="left:22.58px;top:43.15px;font-size:15.2px;color:#c5c8cf;transform:scaleX(0.9412);">Invesco QQQ Trust, Series 1, 30, NASDAQ</div><div class="t" style="left:305.38px;top:43.15px;font-size:15.2px;color:#c5c8cf;transform:scaleX(0.8846);">O</div><div class="t" style="left:316.61px;top:43.15px;font-size:15.2px;color:#4caf50;transform:scaleX(0.9582);">495.09</div><div class="t" style="left:369.48px;top:43.15px;font-size:15.2px;color:#c5c8cf;transform:scaleX(0.9357);">H</div><div class="t" style="left:380.01px;top:43.15px;font-size:15.2px;color:#4caf50;transform:scaleX(0.9604);">495.79</div><div class="t" style="left:433.29px;top:43.15px;font-size:15.2px;color:#c5c8cf;transform:scaleX(0.8444);">L</div><div class="t" style="left:441.52px;top:43.15px;font-size:15.2px;color:#4caf50;transform:scaleX(0.9275);">495.01</div><div class="t" style="left:494.70px;top:43.15px;font-size:15.2px;color:#c5c8cf;transform:scaleX(0.7979);">C</div><div class="t" style="left:504.51px;top:43.15px;font-size:15.2px;color:#4caf50;transform:scaleX(0.9572);">495.16</div><div class="t" style="left:557.54px;top:43.15px;font-size:15.2px;color:#4caf50;transform:scaleX(0.9452);">+0.09 (+0.02%)</div>
<!-- price labels -->
<div class="lab" style="left:1186px;top:411px;width:40px;background:#aa00ff;border-radius:3px 0 0 3px"></div>
<div class="lab" style="left:1227px;top:411px;width:62px;background:#aa00ff;border-radius:0 3px 3px 0"></div>
<div class="lab" style="left:1191px;top:373px;width:35px;background:#c51162;border-radius:3px 0 0 3px"></div>
<div class="lab" style="left:1227px;top:373px;width:62px;background:#c51162;border-radius:0 3px 3px 0"></div>
<div class="lab" style="left:1185px;top:410px;width:41px;background:#4caf50;border-radius:3px 0 0 3px"></div>
<div class="lab" style="left:1227px;top:410px;width:62px;background:#4caf50;border-radius:0 3px 3px 0"></div>
<div class="t" style="left:1195.66px;top:373.65px;font-size:15.2px;color:#fff;transform:scaleX(0.8237);-webkit-text-stroke:0.25px #fff;">SPX</div><div class="t" style="left:1237.62px;top:373.65px;font-size:15.2px;color:#fff;transform:scaleX(0.9014);-webkit-text-stroke:0.25px #fff;">−0.04%</div><div class="t" style="left:1189.39px;top:410.65px;font-size:15.2px;color:#fff;transform:scaleX(0.8693);-webkit-text-stroke:0.25px #fff;">QQQ</div><div class="t" style="left:1237.62px;top:410.65px;font-size:15.2px;color:#fff;transform:scaleX(0.9014);-webkit-text-stroke:0.25px #fff;">−0.53%</div>
<div class="t" style="left:41.95px;top:732.76px;font-size:16px;color:#d1d4dc;transform:scaleX(0.9892);-webkit-text-stroke:0.3px #d1d4dc;">TradingView</div>
</body></html>
